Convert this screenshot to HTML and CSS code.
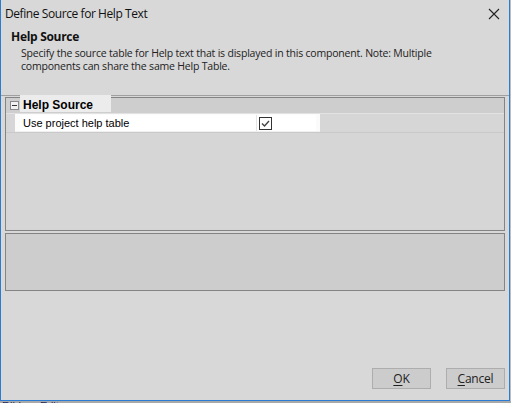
FILE: index.html
```html
<!DOCTYPE html>
<html>
<head>
<meta charset="utf-8">
<link rel="stylesheet" href="styles.css">
</head>
<body>
<div class="window">
  <div class="titlebar">
    <span class="title">Define Source for Help Text</span>
    <svg class="close" width="12" height="12" viewBox="0 0 12 12"><path d="M1 1 L11 11 M11 1 L1 11" stroke="#222" stroke-width="1.1" fill="none"/></svg>
  </div>
  <div class="header">
    <div class="htitle">Help Source</div>
    <div class="hdesc">
      <div class="dline">Specify the source table for Help text that is displayed in this component. Note: Multiple</div>
      <div class="dline">components can share the same Help Table.</div>
    </div>
  </div>
  <div class="sep"></div>
  <div class="content">
    <div class="grid">
      <div class="catrow">
        <div class="expander"><span class="minus"></span></div>
        <div class="catlabel">Help Source</div>
      </div>
      <div class="proprow">
        <div class="pname">Use project help table</div>
        <div class="pval"><svg class="check" width="13" height="13" viewBox="0 0 13 13"><rect x="0.5" y="0.5" width="12" height="12" fill="#fff" stroke="#333"/><path d="M3 6.5 L5.5 9 L10 4" stroke="#444" stroke-width="1.4" fill="none"/></svg></div>
      </div>
      <div class="emptyrow"></div>
    </div>
    <div class="descbox"></div>
    <div class="buttons">
      <button class="btn"><u>O</u>K</button>
      <button class="btn"><u>C</u>ancel</button>
    </div>
  </div>
</div>
<div class="behind">Ribbon Edit</div>
</body>
</html>
```
FILE: styles.css
```css
html, body {
  margin: 0;
  padding: 0;
  width: 511px;
  height: 403px;
  overflow: hidden;
  background: #bdbdbd;
}
.window {
  box-sizing: border-box;
  width: 510px;
  height: 401px;
  background: #d8d8d8;
  border-left: 1px solid #2b7bd3;
  border-right: 1px solid #2b7bd3;
  border-bottom: 1px solid #2b7bd3;
  display: flex;
  flex-direction: column;
  font-family: "Open Sans", "Noto Sans", sans-serif;
  font-size: 11px;
  color: #1a1a1a;
}
.titlebar {
  height: 27px;
  display: flex;
  align-items: center;
  justify-content: space-between;
  padding: 0 9px 0 4px;
}
.title {
  font-size: 12px;
  letter-spacing: -0.42px;
  color: #111;
}
.close { display: block; }
.header {
  padding: 2px 0 0 10px;
  height: 66px;
}
.htitle {
  font-weight: bold;
  font-size: 12px;
  letter-spacing: -0.3px;
  line-height: 16px;
  color: #111;
}
.hdesc {
  margin-top: 2px;
  padding-left: 10px;
  white-space: nowrap;
  color: #222;
  font-size: 10.5px;
  letter-spacing: -0.2px;
}
.dline {
  height: 13px;
  line-height: 13px;
}
.sep {
  height: 1px;
  background: #a0a0a0;
}
.content {
  flex: 1;
  display: flex;
  flex-direction: column;
  padding: 1px 4px 0 4px;
}
.grid {
  position: relative;
  height: 132px;
  border: 1px solid #848484;
  background: #d6d6d6;
  font-family: "Liberation Sans", Arial, sans-serif;
}
.catrow {
  height: 15px;
  background: #cecece;
  border-bottom: 1px solid #e2e2e2;
  display: flex;
}
.expander {
  width: 13px;
  display: flex;
  align-items: center;
  justify-content: center;
}
.minus {
  position: relative;
  box-sizing: border-box;
  width: 9px;
  height: 9px;
  border: 1px solid #8a8a8a;
  background: #f2f2f2;
  margin-left: 3px;
}
.minus::after {
  content: "";
  position: absolute;
  left: 1px;
  top: 3px;
  width: 5px;
  height: 1px;
  background: #333;
}
.catlabel {
  position: absolute;
  left: 14px;
  top: -3px;
  width: 91px;
  height: 17px;
  background: #ececec;
  font-weight: bold;
  font-size: 12px;
  line-height: 20px;
  padding-left: 3px;
  box-sizing: border-box;
  color: #000;
}
.proprow {
  display: flex;
  margin-left: 9px;
  width: 305px;
  height: 18px;
  background: #fbfbfb;
  border-bottom: 1px solid #f0f0f0;
  box-sizing: border-box;
  padding: 1px 4px 0 5px;
}
.pname {
  width: 237px;
  background: #fff;
  border-right: 1px solid #e4e4e4;
  font-size: 11px;
  line-height: 16px;
  padding-left: 3px;
  box-sizing: border-box;
  color: #000;
}
.pval {
  flex: 1;
  background: #fff;
  padding: 2px 0 0 2px;
}
.check { display: block; }
.emptyrow {
  height: 0;
  border-bottom: 1px solid #c9c9c9;
}
.descbox {
  margin-top: 2px;
  height: 56px;
  border: 1px solid #848484;
  background: #cdcdcd;
}
.buttons {
  display: flex;
  justify-content: flex-end;
  gap: 15px;
  margin-top: 77px;
}
.btn {
  width: 59px;
  height: 21px;
  background: #cccccc;
  border: 1px solid #adadad;
  font-family: "Open Sans", "Noto Sans", sans-serif;
  font-size: 12px;
  color: #222;
  padding: 0;
  letter-spacing: -0.2px;
}
.btn u { text-underline-offset: 2px; }
.behind {
  height: 2px;
  overflow: hidden;
  font-family: "Liberation Sans", Arial, sans-serif;
  font-size: 11px;
  line-height: 11px;
  color: #1c2a5a;
  padding-left: 2px;
  background: #a9a9a9;
}
```
